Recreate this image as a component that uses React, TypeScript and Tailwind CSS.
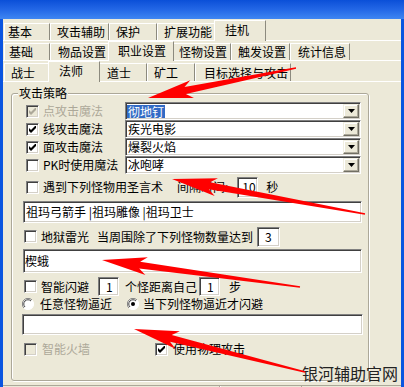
import React from "react";

type Tab = { label: string; cls: string };

const row1: Tab[] = [
  { label: "基本", cls: "w-[46px] pl-[3px]" },
  { label: "攻击辅助", cls: "w-[59px] pl-[6px]" },
  { label: "保护", cls: "w-[48px] pl-[6px]" },
  { label: "扩展功能", cls: "w-[59px] pl-[6px]" },
  { label: "挂机", cls: "w-[52px] pl-[10px]" },
];
const row2: Tab[] = [
  { label: "基础", cls: "w-[46px] pl-[4px]" },
  { label: "物品设置", cls: "w-[60px] pl-[7px]" },
  { label: "职业设置", cls: "w-[66px] pl-[9px]" },
  { label: "怪物设置", cls: "w-[59px] pl-[6px]" },
  { label: "触发设置", cls: "w-[59px] pl-[6px]" },
  { label: "统计信息", cls: "w-[60px] pl-[7px]" },
];
const row3: Tab[] = [
  { label: "战士", cls: "w-[46px] pl-[6px]" },
  { label: "法师", cls: "w-[52px] pl-[10px]" },
  { label: "道士", cls: "w-[49px] pl-[8px]" },
  { label: "矿工", cls: "w-[48px] pl-[6px]" },
  { label: "目标选择与攻击", cls: "w-[96px] pl-[8px]" },
];

function TabRow({ tabs, sel, rowCls, tabH, selH }: { tabs: Tab[]; sel: number; rowCls: string; tabH: string; selH: string }) {
  return (
    <div className={`flex items-end border-b border-white pl-[1px] ${rowCls}`}>
      {tabs.map((t, i) =>
        i === sel ? (
          <div
            key={i}
            className={`relative z-10 -mx-[2px] -mb-[1px] flex items-center pb-[2px] bg-[#ECE9D8] border-t border-l border-r border-t-white border-l-white border-r-[#8C8A7E] whitespace-nowrap ${selH} ${t.cls}`}
          >
            {t.label}
          </div>
        ) : (
          <div
            key={i}
            className={`flex items-center border-t border-l border-r border-t-white border-l-white border-r-[#8C8A7E] whitespace-nowrap ${tabH} ${t.cls}`}
          >
            {t.label}
          </div>
        )
      )}
    </div>
  );
}

function Check({ on, off }: { on?: boolean; off?: boolean }) {
  return (
    <span
      className={`shrink-0 w-[13px] h-[13px] flex items-center justify-center border border-t-[#808080] border-l-[#808080] border-r-white border-b-white shadow-[inset_1px_1px_0_#404040,inset_-1px_-1px_0_#d4d0c8] ${off ? "bg-[#ECE9D8]" : "bg-white"}`}
    >
      {on && (
        <svg width="7" height="7" viewBox="0 0 7 7">
          <path d="M0 2 L2 4 L7 -1 L7 2 L2 7 L0 5 Z" fill={off ? "#ACA899" : "#000"} />
        </svg>
      )}
    </span>
  );
}

function Radio({ on }: { on?: boolean }) {
  return (
    <svg width="12" height="12" viewBox="0 0 12 12" className="shrink-0">
      <circle cx="6" cy="6" r="5.5" fill="#fff" />
      <path d="M10 2 A5.5 5.5 0 0 0 2 10" stroke="#808080" strokeWidth="1" fill="none" />
      <path d="M9 3 A4.2 4.2 0 0 0 3 9" stroke="#404040" strokeWidth="1" fill="none" />
      <path d="M2 10 A5.5 5.5 0 0 0 10 2" stroke="#fff" strokeWidth="1" fill="none" />
      {on && <circle cx="6" cy="6" r="2" fill="#000" />}
    </svg>
  );
}

const sunken =
  "bg-white border border-t-[#808080] border-l-[#808080] border-r-white border-b-white shadow-[inset_1px_1px_0_#404040,inset_-1px_-1px_0_#d4d0c8]";

function Combo({ value, hl }: { value: string; hl?: boolean }) {
  return (
    <div className={`flex h-full w-[236px] ${sunken}`}>
      <div className="flex-1 flex items-center pl-[1px]">
        <span className={hl ? "bg-[#316AC5] text-white px-[1px] leading-[13px]" : "px-[1px]"}>{value}</span>
      </div>
      <div className="w-[16px] my-[1px] mr-[1px] flex items-center justify-center bg-[#ECE9D8] border border-t-[#F1EFE2] border-l-[#F1EFE2] border-r-[#716F64] border-b-[#716F64] shadow-[inset_-1px_-1px_0_#ACA899,inset_1px_1px_0_#fff]">
        <svg width="7" height="4" viewBox="0 0 7 4">
          <path d="M0 0 H7 L3.5 4 Z" fill="#000" />
        </svg>
      </div>
    </div>
  );
}

// tapered red marker arrow, tail -> tip
function arrow(tx: number, ty: number, hx: number, hy: number) {
  const headLen = 38, headW = 18, shaftW = 7, tailW = 1.5, sweep = 7;
  const dx = hx - tx, dy = hy - ty;
  const L = Math.hypot(dx, dy);
  const ux = dx / L, uy = dy / L;
  const nx = -uy, ny = ux;
  const bx = hx - ux * headLen, by = hy - uy * headLen;
  const pts = [
    [tx + (nx * tailW) / 2, ty + (ny * tailW) / 2],
    [bx + (nx * shaftW) / 2, by + (ny * shaftW) / 2],
    [bx - ux * sweep + (nx * headW) / 2, by - uy * sweep + (ny * headW) / 2],
    [hx, hy],
    [bx - ux * sweep - (nx * headW) / 2, by - uy * sweep - (ny * headW) / 2],
    [bx - (nx * shaftW) / 2, by - (ny * shaftW) / 2],
    [tx - (nx * tailW) / 2, ty - (ny * tailW) / 2],
  ];
  return pts.map((p) => p.map((v) => v.toFixed(1)).join(",")).join(" ");
}

export default function App() {
  return (
    <div className="relative w-[404px] h-[387px] overflow-hidden bg-[#ECE9D8] text-[12px] leading-none text-black font-['Noto_Sans_CJK_SC','Liberation_Sans',sans-serif]">
      <div className="h-[19px] bg-gradient-to-b from-[#0A4FD8] via-[#2367E6] to-[#3F86F2]" />
      <div className="flex h-[368px]">
        <div className="w-[3px] bg-[#0A55E0]" />
        <div className="flex-1 flex flex-col">
          <TabRow tabs={row1} sel={4} rowCls="mt-[1px] h-[21px]" tabH="h-[17px]" selH="h-[21px]" />
          <TabRow tabs={row2} sel={2} rowCls="h-[20px]" tabH="h-[17px]" selH="h-[20px]" />
          <TabRow tabs={row3} sel={1} rowCls="h-[21px]" tabH="h-[18px]" selH="h-[21px] pb-[3px]" />

          <div className="relative mt-[11px] ml-[8px] w-[358px] h-[289px] rounded-[3px] border border-[#ACA899] shadow-[inset_1px_1px_0_#fff,1px_1px_0_#fff] pt-[8px]">
            <span className="absolute -top-[7px] left-[6px] px-[1px] bg-[#ECE9D8]">攻击策略</span>

            <div className="flex items-center h-[18px]">
              <span className="ml-[14px]"><Check on off /></span>
              <span className="ml-[4px] w-[82px] text-[#ACA899]">点攻击魔法</span>
              <Combo value="彻地钉" hl />
            </div>
            <div className="flex items-center h-[18px]">
              <span className="ml-[14px]"><Check on /></span>
              <span className="ml-[4px] w-[82px]">线攻击魔法</span>
              <Combo value="疾光电影" />
            </div>
            <div className="flex items-center h-[18px]">
              <span className="ml-[14px]"><Check on /></span>
              <span className="ml-[4px] w-[82px]">面攻击魔法</span>
              <Combo value="爆裂火焰" />
            </div>
            <div className="flex items-center h-[18px]">
              <span className="ml-[14px]"><Check /></span>
              <span className="ml-[4px] w-[82px]">PK时使用魔法</span>
              <Combo value="冰咆哮" />
            </div>

            <div className="flex items-center mt-[2px] h-[22px]">
              <span className="ml-[14px]"><Check /></span>
              <span className="ml-[4px]">遇到下列怪物用圣言术</span>
              <span className="ml-[14px]">间隔时间:</span>
              <div className={`ml-[9px] w-[21px] h-[21px] flex items-center pl-[4px] ${sunken}`}>10</div>
              <span className="ml-[8px]">秒</span>
            </div>

            <div className={`mt-[3px] ml-[11px] w-[339px] h-[22px] flex items-center pl-[2px] ${sunken}`}>
              祖玛弓箭手 |祖玛雕像 |祖玛卫士
            </div>

            <div className="flex items-center mt-[3px] h-[21px]">
              <span className="ml-[12px]"><Check /></span>
              <span className="ml-[4px]">地狱雷光</span>
              <span className="ml-[8px]">当周围除了下列怪物数量达到</span>
              <div className={`ml-[4px] w-[23px] h-[20px] flex items-center pl-[7px] ${sunken}`}>3</div>
            </div>

            <div className={`mt-[2px] ml-[11px] w-[339px] h-[24px] flex items-center pl-[1px] ${sunken}`}>楔蛾</div>

            <div className="flex items-center mt-[4px] h-[19px]">
              <span className="ml-[12px]"><Check /></span>
              <span className="ml-[4px]">智能闪避</span>
              <div className={`ml-[9px] w-[21px] h-[19px] flex items-center pl-[7px] ${sunken}`}>1</div>
              <span className="ml-[6px]">个怪距离自己</span>
              <div className={`ml-[2px] w-[21px] h-[19px] flex items-center pl-[7px] ${sunken}`}>1</div>
              <span className="ml-[9px]">步</span>
            </div>

            <div className="flex items-center h-[15px]">
              <span className="ml-[10px]"><Radio /></span>
              <span className="ml-[6px]">任意怪物逼近</span>
              <span className="ml-[15px]"><Radio on /></span>
              <span className="ml-[4px]">当下列怪物逼近才闪避</span>
            </div>

            <div className={`mt-[3px] ml-[10px] w-[341px] h-[21px] ${sunken}`} />

            <div className="flex items-center mt-[7px] h-[14px]">
              <span className="ml-[12px]"><Check off /></span>
              <span className="ml-[5px] text-[#ACA899]">智能火墙</span>
              <span className="ml-[65px]"><Check on /></span>
              <span className="ml-[5px]">使用物理攻击</span>
            </div>
          </div>

          <div className="mt-[4px] flex border-t border-[#ACA899] h-[2px]">
            <div className="w-[217px] border-r border-[#ACA899]" />
            <div className="w-[82px] border-r border-[#ACA899] border-l border-l-white" />
          </div>
        </div>
        <div className="w-[3px] bg-[#0A55E0]" />
      </div>

      <span className="absolute left-[302px] top-[364px] text-[16px] leading-[18px] text-[#222]">银河辅助官网</span>

      <svg className="absolute left-0 top-0 pointer-events-none" width="404" height="387" viewBox="0 0 404 387">
        <polygon points={arrow(296, 68, 148, 98)} fill="#F00" />
        <polygon points={arrow(365, 214, 172, 179)} fill="#F00" />
        <polygon points={arrow(300, 287, 102, 260)} fill="#F00" />
        <polygon points={arrow(305, 372, 134, 329)} fill="#F00" />
      </svg>
    </div>
  );
}
